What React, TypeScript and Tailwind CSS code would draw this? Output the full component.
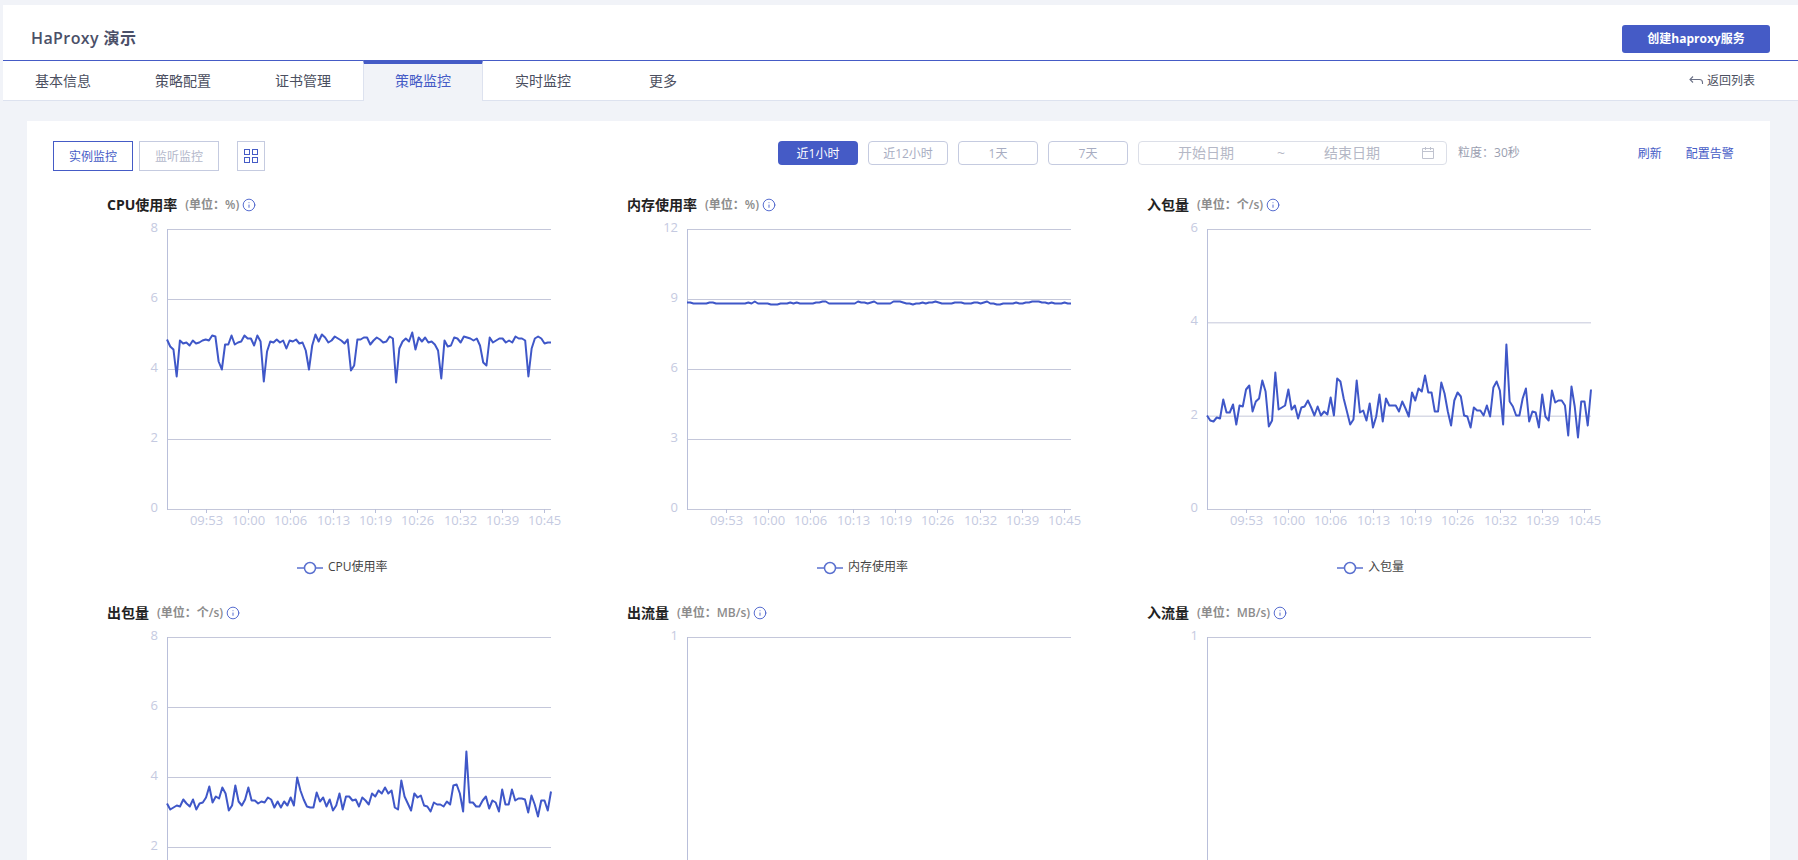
import { Info } from 'lucide-react';

const font = '"Open Sans", "Noto Sans CJK SC", sans-serif';

const tabs = ['基本信息', '策略配置', '证书管理', '策略监控', '实时监控', '更多'];
const ranges = ['近1小时', '近12小时', '1天', '7天'];
const times = ['09:53', '10:00', '10:06', '10:13', '10:19', '10:26', '10:32', '10:39', '10:45'];
const tickX = [39, 81, 123, 166, 208, 250, 293, 335, 377];

// traces read off the reference, in px from the top of the plot
const cpu = [
  110, 117, 120, 147, 111, 114, 113, 116, 111, 114, 113, 111, 110, 111, 106, 107, 132, 140, 115, 115,
  106, 115, 113, 112, 106, 109, 109, 116, 106, 112, 152, 122, 112, 113, 110, 113, 111, 119, 111, 112,
  110, 114, 113, 121, 140, 116, 105, 112, 105, 108, 113, 111, 107, 109, 111, 114, 110, 141, 136, 110,
  110, 108, 108, 115, 111, 108, 110, 113, 112, 107, 109, 153, 119, 112, 109, 112, 103, 120, 108, 112,
  108, 113, 112, 115, 121, 149, 111, 117, 116, 108, 109, 113, 107, 108, 109, 111, 109, 116, 133, 136,
  108, 113, 111, 109, 109, 113, 111, 113, 107, 109, 109, 111, 147, 119, 109, 107, 109, 114, 113, 113,
];
const memory = [
  73, 73, 74, 74, 74, 74, 74, 73, 73, 74, 74, 74, 74, 74, 74, 74, 74, 74, 74, 73, 74, 72, 74, 74, 74,
  74, 75, 75, 75, 74, 74, 74, 73, 74, 73, 74, 74, 74, 74, 74, 73, 73, 72, 72, 74, 74, 74, 74, 74, 74,
  74, 74, 74, 72, 73, 73, 74, 73, 72, 74, 74, 74, 74, 74, 72, 72, 72, 73, 74, 74, 75, 74, 74, 73, 74,
  73, 73, 72, 73, 74, 74, 74, 74, 73, 73, 73, 74, 74, 74, 73, 73, 74, 73, 72, 74, 74, 75, 75, 74, 74,
  74, 74, 73, 74, 74, 73, 73, 72, 72, 72, 73, 73, 74, 73, 74, 74, 74, 73, 74, 74,
];
const packetsIn = [
  186, 191, 192, 188, 189, 170, 183, 183, 175, 195, 176, 177, 160, 156, 182, 172, 169, 151, 162, 197,
  191, 143, 180, 178, 176, 160, 180, 176, 189, 178, 177, 171, 178, 186, 177, 186, 182, 185, 168, 186,
  149, 152, 169, 182, 195, 190, 151, 183, 181, 191, 174, 198, 187, 165, 192, 169, 176, 176, 176, 182,
  172, 179, 187, 163, 171, 159, 162, 146, 163, 163, 182, 182, 153, 164, 182, 196, 171, 163, 167, 186,
  187, 198, 178, 181, 181, 186, 176, 187, 158, 152, 161, 195, 115, 172, 177, 186, 186, 169, 159, 192,
  182, 183, 198, 165, 187, 191, 161, 173, 171, 171, 176, 206, 157, 177, 208, 172, 172, 196, 160,
];
const packetsOut = [
  166, 172, 170, 168, 169, 162, 166, 169, 162, 172, 166, 165, 160, 149, 165, 159, 161, 150, 156, 173,
  168, 148, 164, 168, 162, 150, 163, 163, 166, 164, 165, 160, 162, 170, 164, 170, 164, 168, 160, 168,
  140, 153, 162, 169, 170, 170, 155, 164, 160, 169, 162, 173, 168, 156, 172, 159, 159, 163, 162, 169,
  160, 163, 167, 156, 159, 153, 156, 150, 156, 153, 170, 172, 143, 159, 166, 173, 156, 160, 158, 168,
  169, 174, 165, 167, 167, 169, 164, 167, 148, 147, 156, 174, 114, 165, 165, 169, 169, 163, 159, 171,
  163, 165, 174, 152, 167, 167, 152, 163, 161, 161, 162, 175, 158, 167, 179, 163, 163, 173, 154,
];

type ChartProps = {
  title: string;
  unit: string;
  ticks: string[];
  interval: number;
  trace?: number[];
  // the lower row runs past the bottom of the window, so it has no x axis or legend
  cut?: boolean;
};

const charts: ChartProps[] = [
  { title: 'CPU使用率', unit: '(单位\uFF1A%)', ticks: ['8', '6', '4', '2', '0'], interval: 70, trace: cpu },
  { title: '内存使用率', unit: '(单位\uFF1A%)', ticks: ['12', '9', '6', '3', '0'], interval: 70, trace: memory },
  { title: '入包量', unit: '(单位\uFF1A个/s)', ticks: ['6', '4', '2', '0'], interval: 93.33, trace: packetsIn },
  { title: '出包量', unit: '(单位\uFF1A个/s)', ticks: ['8', '6', '4', '2'], interval: 70, trace: packetsOut, cut: true },
  { title: '出流量', unit: '(单位\uFF1AMB/s)', ticks: ['1'], interval: 280, cut: true },
  { title: '入流量', unit: '(单位\uFF1AMB/s)', ticks: ['1'], interval: 280, cut: true },
];

const Chart = ({ title, unit, ticks, interval, trace, cut }: ChartProps) => {
  const step = trace ? 384 / (trace.length - 1) : 0;
  const line = trace?.map((y, i) => `${60 + i * step},${14.5 + y}`).join(' ');

  return (
    <div>
      <div className="flex h-5 items-center">
        <span className="text-sm font-bold text-[#222222]">{title}</span>
        <span className="ml-2 text-xs font-semibold text-[#8c8c8c]">{unit}</span>
        <Info size={14} strokeWidth={1.6} className="ml-[3px] text-[#4a62cb]" />
      </div>
      <svg width="520" height={cut ? 245 : 388} className="block">
        {ticks.map((label, i) => {
          const y = 14.5 + i * interval;
          return (
            <g key={label}>
              <line x1="60" x2="444" y1={y} y2={y} stroke="#c4c7da" />
              <text x="51" y={y - 1} textAnchor="end" dominantBaseline="middle" fontSize="13" fill="#c5cae1">
                {label}
              </text>
            </g>
          );
        })}
        <line x1="60.5" x2="60.5" y1="14" y2="295" stroke="#b9bfda" />
        {!cut &&
          times.map((time, i) => (
            <g key={time}>
              <line x1={60.5 + tickX[i]} x2={60.5 + tickX[i]} y1="294" y2="298" stroke="#b9bfda" />
              <text x={60.5 + tickX[i]} y="307" textAnchor="middle" dominantBaseline="middle" fontSize="13" fill="#c5cae1">
                {time}
              </text>
            </g>
          ))}
        {line && <polyline points={line} fill="none" stroke="#3f57c8" strokeWidth="2" strokeLinejoin="round" />}
        {!cut && (
          <g>
            <line x1="190" x2="216" y1="353" y2="353" stroke="#5a70cf" strokeWidth="1.5" />
            <circle cx="203" cy="353" r="5.5" fill="#ffffff" stroke="#5a70cf" strokeWidth="1.5" />
            <text x="221" y="353" dominantBaseline="middle" fontSize="12" fill="#444444">
              {title}
            </text>
          </g>
        )}
      </svg>
    </div>
  );
};

const App = () => {
  return (
    <div className="h-screen overflow-hidden bg-[#f1f3f8] pt-[5px] pl-[3px]" style={{ fontFamily: font }}>
      <header className="flex h-[56px] items-start justify-between border-b border-[#455bc6] bg-white pr-7">
        <h1 className="mt-[21px] pl-7 text-base leading-6 font-semibold tracking-[0.4px] text-[#4b5068]">HaProxy 演示</h1>
        <button className="mt-5 h-7 w-[148px] rounded-[3px] bg-[#455bc6] text-xs font-bold text-white">
          创建haproxy服务
        </button>
      </header>

      <nav className="flex h-[40px] items-center border-b border-[#dde2ef] bg-white">
        {tabs.map((tab) =>
          tab === '策略监控' ? (
            <div
              key={tab}
              className="-mt-px h-[41px] w-[120px] border-x border-t-4 border-x-[#dde2ef] border-t-[#455bc6] bg-[#f1f3f8] pt-[5px] text-center text-sm leading-6 text-[#455bc6]"
            >
              {tab}
            </div>
          ) : (
            <div key={tab} className="w-[120px] text-center text-sm text-[#4b4f60]">
              {tab}
            </div>
          ),
        )}
        <a className="mr-[43px] ml-auto flex items-center gap-[3px] text-xs text-[#4b4f60]">
          <svg width="15" height="12" viewBox="0 0 15 12" fill="none" stroke="#6b7186" strokeWidth="1.1">
            <path d="M1 4.5h9.5a3 3 0 0 1 3 3v1.5M4 1.5 1 4.5l3 3" />
          </svg>
          返回列表
        </a>
      </nav>

      <main className="mt-5 ml-6 w-[1743px] bg-white pt-5">
        <div className="flex items-start">
          <div className="ml-[26px] flex w-[725px] gap-[6px]">
            <button className="h-[30px] w-[80px] border border-[#455bc6] pt-px text-xs text-[#455bc6]">实例监控</button>
            <button className="h-[30px] w-[80px] border border-[#c5cbe0] pt-px text-xs text-[#b4b8cb]">监听监控</button>
            <button className="ml-[12px] flex h-[30px] w-[28px] items-center justify-center border border-[#c5cbe0]">
              <svg width="14" height="14" viewBox="0 0 14 14" fill="none" stroke="#455bc6">
                <rect x="0.5" y="0.5" width="5" height="5" />
                <rect x="8.5" y="0.5" width="5" height="5" />
                <rect x="0.5" y="8.5" width="5" height="5" />
                <rect x="8.5" y="8.5" width="5" height="5" />
              </svg>
            </button>
          </div>
          <div className="flex gap-[10px]">
            {ranges.map((range, i) => (
              <button
                key={range}
                className={
                  i === 0
                    ? 'h-6 w-[80px] rounded bg-[#455bc6] pt-px text-xs text-white'
                    : 'h-6 w-[80px] rounded border border-[#c5cbe0] pt-px text-xs text-[#a8adc2]'
                }
              >
                {range}
              </button>
            ))}
            <div className="flex h-6 w-[309px] items-center rounded border border-[#dcdfe8] pr-[11px] pl-[39px] text-sm text-[#b5b8c6]">
              <span className="w-[99px]">开始日期</span>
              <span className="w-[47px]">~</span>
              <span>结束日期</span>
              <svg width="14" height="14" viewBox="0 0 14 14" fill="none" stroke="#c0c3cf" className="ml-auto">
                <path d="M1.5 2.5h11v10h-11zM1.5 5.5h11M4.5 1v3M9.5 1v3" />
              </svg>
            </div>
          </div>
          <span className="ml-[11px] text-xs leading-6 text-[#9a9eb0]">粒度{'\uFF1A'}30秒</span>
          <div className="mt-px ml-[118px] flex gap-6 text-xs leading-6 text-[#455bc6]">
            <a>刷新</a>
            <a>配置告警</a>
          </div>
        </div>

        <div className="mt-6 ml-20 grid grid-cols-[520px_520px_520px]">
          {charts.map((chart) => (
            <Chart key={chart.title} {...chart} />
          ))}
        </div>
      </main>
    </div>
  );
};

export default App;
